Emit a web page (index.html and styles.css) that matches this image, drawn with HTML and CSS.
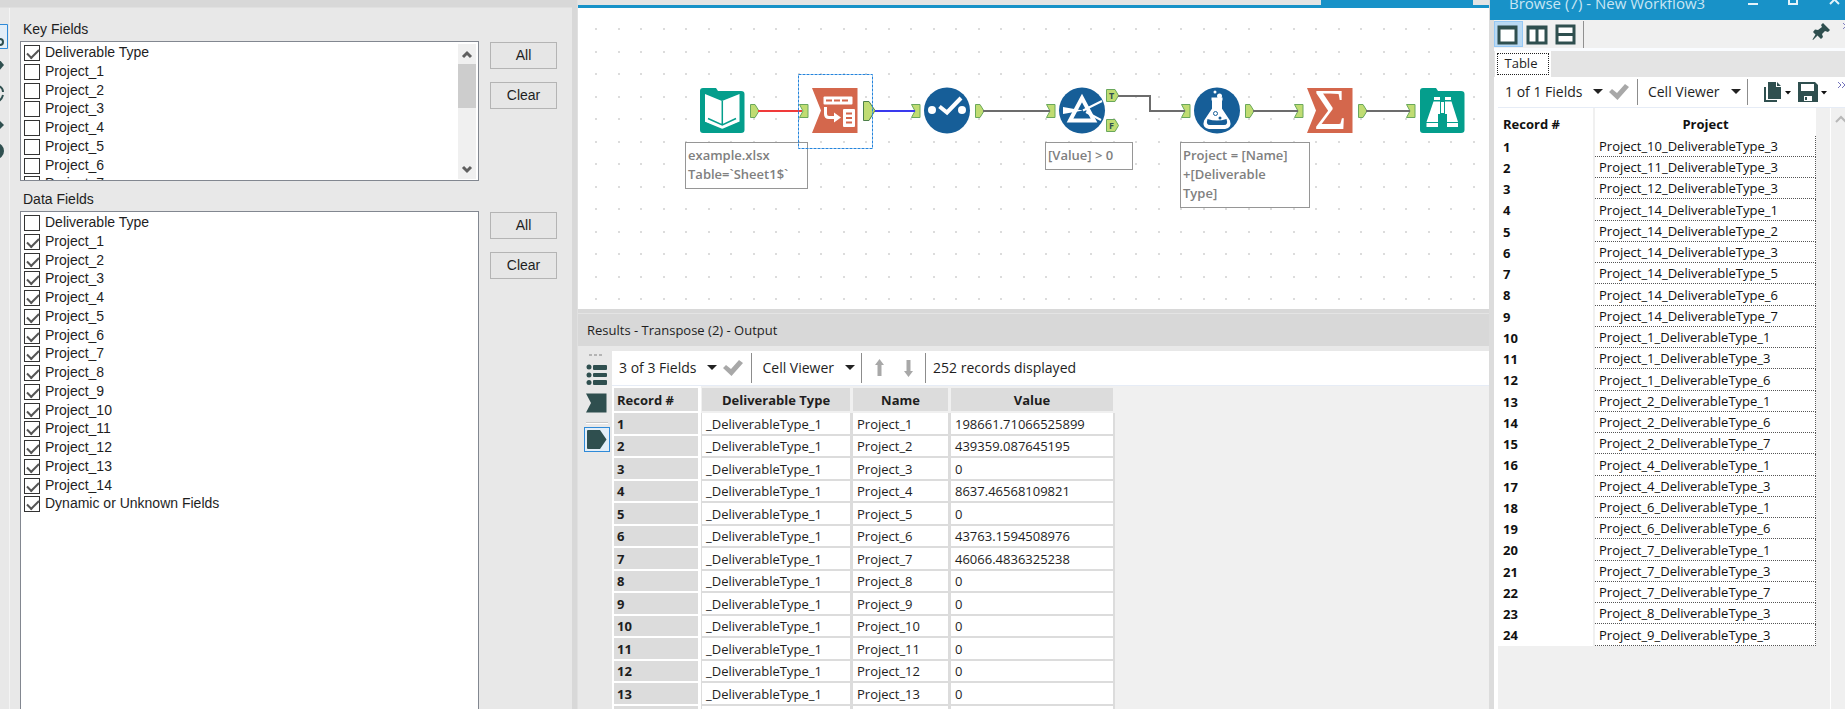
FILE: index.html
```
<!DOCTYPE html>
<html lang="en">
<head>
    <meta charset="UTF-8">
    <meta name="viewport" content="width=device-width, initial-scale=1.0">
    <title>New Workflow3</title>
    <link rel="stylesheet" href="styles.css">
</head>
<body>

<!-- Configuration panel -->
<aside class="config">
    <div class="config-bar"></div>
    <div class="config-body">
        <div class="config-rail">
            <svg width="9" height="152" viewBox="0 8 9 152">
                <path d="M-2 24.5H7.5V48.5H-2" fill="#e3eef8" stroke="#2f8ad8"/>
                <circle cx="0" cy="42" r="3" fill="none" stroke="#2f4f4f" stroke-width="2"/>
                <path d="M-2 58L4 65L-2 72Z" fill="#2f4f4f"/>
                <path d="M-1 86Q3 88 3 92M3 95Q2 99 -1 101" fill="none" stroke="#2f4f4f" stroke-width="2"/>
                <path d="M-2 119L4 125L-2 131Z" fill="#2f4f4f"/>
                <circle cx="-4" cy="151" r="8" fill="#2f4f4f"/>
            </svg>
        </div>
        <div class="config-fields">
            <section class="field-group">
                <h2>Key Fields</h2>
                <div class="field-row">
                    <div class="list-box key-box">
                        <ul class="field-list key-list" id="key-fields"></ul>
                        <div class="scrollbar">
                            <svg width="18" height="20" viewBox="0 0 18 20"><path d="M5 13L9 9L13 13" fill="none" stroke="#606060" stroke-width="3"/></svg>
                            <div class="thumb"></div>
                            <svg class="down" width="18" height="20" viewBox="0 0 18 20"><path d="M5 8L9 12L13 8" fill="none" stroke="#606060" stroke-width="3"/></svg>
                        </div>
                    </div>
                    <div class="field-buttons">
                        <button type="button">All</button>
                        <button type="button">Clear</button>
                    </div>
                </div>
            </section>
            <section class="field-group data-group">
                <h2>Data Fields</h2>
                <div class="field-row">
                    <div class="list-box">
                        <ul class="field-list data-list" id="data-fields"></ul>
                    </div>
                    <div class="field-buttons">
                        <button type="button">All</button>
                        <button type="button">Clear</button>
                    </div>
                </div>
            </section>
        </div>
    </div>
</aside>

<div class="splitter"></div>

<!-- Workflow canvas and results grid -->
<main class="workspace">
    <div class="tab-strip">
        <div class="tab-active"></div>
    </div>

    <div class="canvas">
        <div class="note note-input">example.xlsx<br>Table=`Sheet1$`</div>
        <div class="note note-filter">[Value] &gt; 0</div>
        <div class="note note-formula">Project = [Name]<br>+[Deliverable<br>Type]</div>

        <svg class="diagram" width="911" height="301" viewBox="578 8 911 301">
            <defs>
                <path id="out" d="M0.5 0.5H5L9 7L5 13.5H0.5Z" fill="#c0dc72" stroke="#6aa85c"/>
                <path id="in" d="M0.5 0.5H9V13.5H0.5L4 7Z" fill="#c0dc72" stroke="#6aa85c"/>
            </defs>

            <!-- Anchors -->
            <use href="#out" x="750" y="104"/>
            <use href="#in" x="799" y="104"/>
            <path d="M863.5 101.5H869L875 110.5L869 120.5H863.5Z" fill="#c0dc72" stroke="#4d7f4a"/>
            <use href="#in" x="911" y="104"/>
            <use href="#out" x="975" y="104"/>
            <use href="#in" x="1046" y="104"/>
            <use href="#in" x="1181" y="104"/>
            <use href="#out" x="1245" y="104"/>
            <use href="#in" x="1294" y="104"/>
            <use href="#out" x="1358" y="104"/>
            <use href="#in" x="1406" y="104"/>
            <path d="M1106.5 89.5H1115L1118.5 95.5L1115 101.5H1106.5Z M1106.5 119.5H1115L1118.5 125.5L1115 131.5H1106.5Z" fill="#c0dc72" stroke="#6aa85c"/>
            <text class="anchor-text" x="1109" y="99">T</text>
            <text class="anchor-text" x="1109" y="129">F</text>

            <!-- Connections -->
            <g fill="none" stroke="#6c6c6c" stroke-width="2">
                <path d="M758 111H802" stroke="#f03a3a"/>
                <path d="M875 111H915" stroke="#3a3aee"/>
                <path d="M983 111H1050"/>
                <path d="M1118 96H1150V111H1185"/>
                <path d="M1253 111H1298"/>
                <path d="M1366 111H1410"/>
            </g>

            <!-- Input Data -->
            <path d="M703 88H716L718 91H741Q744.500 91 744.500 94V130Q744.500 133 741 133H703Q700 133 700 130V91Q700 88 703 88Z" fill="#049e8c"/>
            <path d="M705 94L722 101L739.500 94V122L722 130L705 122Z" fill="#fff"/>
            <path d="M722.300 101V125M708 118.500L722.300 125L736 118.500" fill="none" stroke="#049e8c" stroke-width="1.500"/>
            <path d="M704 122.500L722.300 130L740 122.500" fill="none" stroke="#049e8c" stroke-width="2"/>

            <!-- Transpose -->
            <rect x="798.500" y="74.500" width="74" height="74" fill="none" stroke="#2484dc" stroke-dasharray="3 1"/>
            <path d="M812 88H857.500V133H812L821 110.500Z" fill="#d4674c"/>
            <rect x="823.500" y="96.500" width="29" height="8" rx="1" fill="#fff"/>
            <path d="M826 100.500H850" stroke="#d4674c" stroke-width="2" stroke-dasharray="6 2"/>
            <path d="M825.500 107V114Q825.500 117.500 829 117.500H835" fill="none" stroke="#fff" stroke-width="3"/>
            <path d="M834 112.500L841 117.500L834 122.500Z" fill="#fff"/>
            <rect x="843" y="109" width="12" height="18" rx="1" fill="#fff"/>
            <path d="M846 113.500H852M846 118H852M846 122.500H852" stroke="#d4674c" stroke-width="2"/>

            <!-- Select -->
            <circle cx="947" cy="110.500" r="23" fill="#165e98"/>
            <circle cx="932" cy="110" r="4" fill="#fff"/>
            <circle cx="962" cy="110" r="4" fill="#fff"/>
            <path d="M939.500 106.500L947 112.500L961 98" fill="none" stroke="#fff" stroke-width="4"/>

            <!-- Filter -->
            <circle cx="1082" cy="110.500" r="23" fill="#165e98"/>
            <path d="M1082 98L1070 120.500H1094Z" fill="#165e98" stroke="#fff" stroke-width="4"/>
            <path d="M1063 107L1083 110.500L1063 114Z" fill="#fff"/>
            <path d="M1083 110.500L1102 101M1086 112L1101 120" stroke="#fff" stroke-width="2"/>

            <!-- Formula -->
            <circle cx="1217" cy="110.500" r="23" fill="#165e98"/>
            <path d="M1211.500 99H1222.500M1213.500 99V109L1205.500 121Q1203.500 127 1209 127.500H1225Q1230.500 127 1228.500 121L1220.500 109V99" fill="#fff" stroke="#fff" stroke-width="3" stroke-linejoin="round"/>
            <path d="M1207.500 119Q1217 122 1226.500 119Q1228.500 125 1224 125H1210Q1205.500 125 1207.500 119Z" fill="#165e98"/>
            <circle cx="1215.500" cy="113.500" r="2" fill="none" stroke="#165e98" stroke-width="1"/>
            <circle cx="1220" cy="118" r="1.500" fill="#165e98"/>
            <circle cx="1219.500" cy="96" r="2.500" fill="#fff"/>
            <circle cx="1215" cy="92" r="1.500" fill="#fff"/>

            <!-- Summarize -->
            <path d="M1307 88H1352.500V133H1307L1316 110.500Z" fill="#d4674c"/>
            <text class="sigma" x="1314" y="129">Σ</text>

            <!-- Browse -->
            <path d="M1423 88H1436L1438 91H1461Q1464.500 91 1464.500 94V130Q1464.500 133 1461 133H1423Q1420 133 1420 130V91Q1420 88 1423 88Z" fill="#049e8c"/>
            <path d="M1434 97H1440V100H1434ZM1445 97H1451V100H1445ZM1433.500 101.500H1440V114H1438V127H1426.500V122ZM1451.500 101.500H1445V114H1447V127H1458V122ZM1441 102H1444V113H1441Z" fill="#fff"/>
            <path d="M1426 122.500H1438M1447 122.500H1458.500" stroke="#049e8c" stroke-width="1"/>
        </svg>
    </div>

    <section class="results">
        <h2 class="results-title">Results - Transpose (2) - Output</h2>
        <div class="results-body">
            <div class="results-rail">
                <svg width="28" height="102" viewBox="583 351 28 102">
                    <path d="M589 355H602" stroke="#b4b4b4" stroke-width="2" stroke-dasharray="3 2"/>
                    <g fill="#2f4f4f">
                        <circle cx="589" cy="367" r="2.500"/><rect x="593" y="365" width="14" height="5" rx="1"/>
                        <circle cx="589" cy="375" r="2.500"/><rect x="593" y="373" width="14" height="4" rx="1"/>
                        <circle cx="589" cy="382.500" r="2.500"/><rect x="593" y="380" width="14" height="5" rx="1"/>
                        <path d="M586 393.500H606.500V412.500H586L591 403Z"/>
                    </g>
                    <path d="M586 422.500H608" stroke="#c8c8c8"/>
                    <path d="M586 423.500H608" stroke="#fff"/>
                    <rect x="584.500" y="427.500" width="25" height="24" fill="#e3eef8" stroke="#2f8ad8"/>
                    <path d="M588 430H600L606.500 439.500L600 449H588Q587 449 587 448V431Q587 430 588 430Z" fill="#2f4f4f"/>
                </svg>
            </div>
            <div class="results-data">
                <div class="toolbar">
                    <button type="button" class="menu-button">3 of 3 Fields <span class="caret"></span></button>
                    <svg class="tick" width="20" height="16" viewBox="0 0 20 16"><path d="M0 8L3 5L8 9L16 0L20 3L8.500 16Z" fill="#a8a8a8"/></svg>
                    <span class="divider"></span>
                    <button type="button" class="menu-button viewer">Cell Viewer <span class="caret"></span></button>
                    <span class="divider"></span>
                    <svg class="arrows" width="38" height="18" viewBox="0 0 38 18"><path d="M0 6L4.500 0L9 6H6.500V17H2.500V6ZM29 12L33.500 18L38 12H35.500V1H31.500V12Z" fill="#a8a8a8"/></svg>
                    <span class="divider"></span>
                    <span class="record-count">252 records displayed</span>
                </div>
                <div class="grid-area">
                    <table class="results-grid">
                        <thead>
                            <tr><th class="col-record">Record #</th><th class="col-type">Deliverable Type</th><th class="col-name">Name</th><th class="col-value">Value</th></tr>
                        </thead>
                        <tbody id="results-rows"></tbody>
                    </table>
                </div>
            </div>
        </div>
    </section>
</main>

<!-- Browse window -->
<section class="browse">
    <header class="title-bar">
        <h1>Browse (7) - New Workflow3</h1>
        <svg width="92" height="20" viewBox="1748 -8 92 20"><path d="M1748 3H1758M1789 -4V3H1797V-4M1830 -6L1839 3M1839 -6L1830 3" fill="none" stroke="#e4f3fa" stroke-width="2"/></svg>
    </header>
    <div class="browse-body">
        <div class="layout-bar">
            <svg width="94" height="28" viewBox="1494 20 94 28">
                <rect x="1494.500" y="21.500" width="28" height="25" fill="#b9d9f3" stroke="#96c8f5"/>
                <g fill="#fff" stroke="#2f4f4f" stroke-width="3">
                    <rect x="1499" y="27" width="17" height="16"/>
                    <rect x="1528" y="27" width="18" height="16"/>
                    <rect x="1557" y="26" width="17" height="17"/>
                    <path d="M1498 28H1517M1527 28H1547M1537 27V43M1556 34.500H1575"/>
                </g>
                <path d="M1583.500 21V48" stroke="#909090"/>
            </svg>
            <svg width="36" height="24" viewBox="1809 22 36 24">
                <path d="M1823 25L1830 32L1828 34L1825 33L1822 36L1823 39L1821 41L1817.500 37.500L1813 42L1812.500 41.500L1815.500 36.500L1813 34L1815 31.500L1818 32L1822 29L1821 27Z" fill="#2f4f4f"/>
                <path d="M1843 25L1846 28L1843 31" fill="none" stroke="#8080c0"/>
            </svg>
        </div>
        <div class="tabs">
            <button type="button" class="tab">Table</button>
        </div>
        <div class="toolbar browse-toolbar">
            <button type="button" class="menu-button">1 of 1 Fields <span class="caret"></span></button>
            <svg class="tick" width="20" height="16" viewBox="0 0 20 16"><path d="M0 8L3 5L8 9L16 0L20 3L8.500 16Z" fill="#a8a8a8"/></svg>
            <span class="divider"></span>
            <button type="button" class="menu-button viewer">Cell Viewer <span class="caret"></span></button>
            <span class="divider"></span>
            <svg class="file-icons" width="81" height="22" viewBox="1764 82 81 22">
                <path d="M1765 88V102H1777" fill="none" stroke="#2f4f4f" stroke-width="2"/>
                <path d="M1768 83H1776V88H1781V100H1768ZM1777 83L1781 87H1777Z" fill="#2f4f4f"/>
                <path d="M1785 92H1791L1788 95.500ZM1821 92H1827L1824 95.500Z" fill="#111"/>
                <path d="M1798 83H1815L1818 86V103H1798Z" fill="#2f4f4f"/>
                <path d="M1801 85H1814V92H1801ZM1804 97H1812V102H1804Z" fill="#fff"/>
                <path d="M1806 98V101" stroke="#2f4f4f" stroke-width="2"/>
                <path d="M1838 83L1841 86L1838 89M1842 83L1845 86L1842 89" fill="none" stroke="#7474bc"/>
            </svg>
        </div>
        <div class="browse-data">
            <table class="browse-grid">
                <thead>
                    <tr><th class="col-id">Record #</th><th class="col-project">Project</th></tr>
                </thead>
                <tbody id="browse-rows"></tbody>
            </table>
            <div class="browse-scroll">
                <svg width="14" height="20" viewBox="0 0 14 20"><path d="M5 14L10 9L15 14" fill="none" stroke="#b8b8b8" stroke-width="2"/></svg>
            </div>
        </div>
    </div>
</section>

<script src="script.js"></script>
</body>
</html>
```
FILE: styles.css
```
/* Basic styling */
* {
    box-sizing: border-box;
}
body {
    margin: 0;
    display: flex;
    height: 100vh;
    overflow: hidden;
    background: #e8e8e8;
    color: #1e1e1e;
    font-family: "Open Sans", "Noto Sans", sans-serif;
    font-size: 14px;
}
h1, h2 {
    margin: 0;
    font-weight: normal;
}
button {
    font: inherit;
    color: inherit;
}
svg {
    display: block;
    flex: none;
}

/* Configuration panel */
.config {
    flex: 0 0 572px;
    display: flex;
    flex-direction: column;
    font-family: "Liberation Sans", Arial, sans-serif;
    font-size: 14px;
}
.config-bar {
    flex: 0 0 8px;
    background: #d8d8d8;
    border-bottom: 1px solid #e0e0e0;
}
.config-body {
    flex: 1;
    display: flex;
    min-height: 0;
}
.config-rail {
    flex: 0 0 10px;
    border-right: 1px solid #f4f4f4;
}
.config-fields {
    flex: 1;
    display: flex;
    flex-direction: column;
    padding: 12px 15px 0 10px;
}
.field-group {
    display: flex;
    flex-direction: column;
}
.data-group {
    flex: 1;
    margin-top: 9px;
    min-height: 0;
}
.field-group h2 {
    height: 21px;
    padding-left: 3px;
    font-size: 14px;
    line-height: 18px;
}
.field-row {
    flex: 1;
    display: flex;
    gap: 11px;
    min-height: 0;
}
.list-box {
    flex: 1;
    display: flex;
    background: #fff;
    border: 1px solid #828790;
    border-bottom: 0;
    padding: 1px 2px;
}
.key-box {
    height: 140px;
    overflow: hidden;
    border-bottom: 1px solid #828790;
}
.field-list {
    flex: 1;
    display: grid;
    grid-auto-rows: 1fr;
    margin: 0;
    padding: 0;
    list-style: none;
}
.key-list {
    height: 150px;
}
.data-list {
    height: 300px;
}
.field-list label {
    display: flex;
    align-items: center;
    gap: 5px;
    line-height: 18px;
}
.field-list input {
    appearance: none;
    width: 16px;
    height: 16px;
    margin: 2px 0 0 1px;
    border: 1px solid #333;
    background: #fff;
}
.field-list input:checked::after {
    content: "";
    display: block;
    width: 10px;
    height: 5px;
    margin: 3px 0 0 2px;
    border-left: 2px solid #555;
    border-bottom: 2px solid #555;
    transform: rotate(-45deg);
}
.scrollbar {
    flex: 0 0 18px;
    display: flex;
    flex-direction: column;
    margin-top: 1px;
    background: #f0f0f0;
}
.thumb {
    height: 44px;
    background: #cdcdcd;
}
.down {
    margin-top: auto;
}
.field-buttons {
    flex: 0 0 67px;
    display: flex;
    flex-direction: column;
    gap: 13px;
    padding-top: 1px;
}
.field-buttons button {
    height: 27px;
    padding: 0 0 2px;
    border: 1px solid #b4b4b4;
    background: #e6e6e6;
}

.splitter {
    flex: 0 0 6px;
    background: #d8d8d8;
    border-right: 1px solid #e0e0e0;
}

/* Workflow canvas */
.workspace {
    flex: 1;
    display: flex;
    flex-direction: column;
    min-width: 0;
}
.tab-strip {
    flex: 0 0 8px;
    display: flex;
    justify-content: flex-end;
    padding-right: 16px;
    background: #e4e4e4;
    border-bottom: 3px solid #1892c8;
}
.tab-active {
    width: 152px;
    background: #1892c8;
}
.canvas {
    position: relative;
    flex: 0 0 301px;
    overflow: hidden;
    background-color: #fff;
    background-image:
        radial-gradient(circle at 1px 1px, #dcdcdc 1px, transparent 1px),
        radial-gradient(circle at 1px 1px, #dcdcdc 1px, transparent 1px),
        radial-gradient(circle at 1px 1px, #dcdcdc 1px, transparent 1px),
        radial-gradient(circle at 1px 1px, #dcdcdc 1px, transparent 1px);
    background-size: 45px 45px;
    background-position: 17px 20px, 40px 20px, 17px 43px, 40px 43px;
}
.diagram {
    position: absolute;
    left: 0;
    top: 0;
}
.anchor-text {
    font: bold 9px "Open Sans", sans-serif;
    fill: #2f4f4f;
}
.sigma {
    font: 56px "Liberation Serif", serif;
    fill: #fff;
}
.note {
    position: absolute;
    top: 134px;
    padding: 3px 2px 4px;
    border: 1px solid #969696;
    background: #fff;
    color: #808080;
    font-size: 13px;
    font-weight: 600;
    line-height: 19px;
    white-space: nowrap;
}
.note-input {
    left: 107px;
    width: 123px;
}
.note-filter {
    left: 467px;
    width: 88px;
}
.note-formula {
    left: 602px;
    width: 130px;
}

/* Results */
.results {
    flex: 1;
    display: flex;
    flex-direction: column;
    min-height: 0;
    border-top: 4px solid #d8d8d8;
}
.results-title {
    flex: 0 0 33px;
    padding-left: 9px;
    border-top: 1px solid #e4e4e4;
    background: #d8d8d8;
    font-size: 13px;
    line-height: 32px;
}
.results-body {
    flex: 1;
    display: flex;
    min-height: 0;
    padding-top: 5px;
}
.results-rail {
    flex: 0 0 34px;
    padding-left: 5px;
}
.results-data {
    flex: 1;
    display: flex;
    flex-direction: column;
    min-width: 0;
}
.toolbar {
    display: flex;
    align-items: center;
    height: 35px;
    padding: 0 0 1px 7px;
    background: #fff;
    border-bottom: 1px solid #e6ecf6;
    white-space: nowrap;
}
.menu-button {
    display: flex;
    align-items: center;
    gap: 11px;
    padding: 0;
    border: 0;
    background: none;
}
.caret {
    border: 5px solid transparent;
    border-top-color: #222;
    border-bottom-width: 0;
}
.tick {
    margin: 0 8px 0 6px;
}
.divider {
    width: 1px;
    height: 30px;
    background: #8c8c8c;
}
.viewer {
    margin: 0 6px 0 10px;
}
.arrows {
    margin: 0 12px 0 13px;
}
.record-count {
    margin-left: 7px;
}
.grid-area {
    flex: 1;
    min-height: 0;
    overflow: hidden;
    background: #f0f0f0;
}
.results-grid {
    border-spacing: 0;
    table-layout: fixed;
    width: 503px;
    background: #dcdcdc;
    font-size: 13px;
    line-height: 18px;
}
.results-grid th, .results-grid td {
    padding: 0 4px;
    border: 1px solid #f0f0f0;
    border-width: 0 2px 2px 1px;
    white-space: nowrap;
}
.results-grid th {
    background: #dcdcdc;
    font-weight: bold;
}
.results-grid thead th {
    height: 27px;
    border-top-width: 2px;
}
.results-grid td {
    height: 23px;
    background: #fff;
    border-color: #dcdcdc;
}
.results-grid tbody tr:nth-child(even) td {
    height: 22px;
}
.results-grid .col-record, .results-grid tbody th {
    text-align: left;
    padding-left: 3px;
    border-left-width: 2px;
    border-right-width: 3px;
    border-color: #fff;
}
.col-record {
    width: 89px;
}
.col-type {
    width: 151px;
}
.col-name {
    width: 98px;
}

/* Browse window */
.browse {
    flex: 0 0 356px;
    display: flex;
    flex-direction: column;
    min-width: 0;
    overflow: hidden;
}
.title-bar {
    display: flex;
    align-items: flex-end;
    justify-content: space-between;
    height: 20px;
    min-height: 0;
    flex: none;
    padding: 0 5px 7px 19px;
    overflow: hidden;
    border-left: 1px solid #d8d8d8;
    background: #1892c8;
    color: #c8e6f4;
}
.title-bar h1 {
    font-size: 15px;
    line-height: 20px;
}
.browse-body {
    flex: 1;
    display: flex;
    flex-direction: column;
    min-height: 0;
    border-left: 5px solid #dcdcdc;
    background: #fff;
}
.layout-bar {
    flex: 0 0 31px;
    display: flex;
    justify-content: space-between;
    border-bottom: 3px solid #fafcff;
    background: #f0f0f0;
}
.tabs {
    flex: 0 0 26px;
    display: flex;
    padding-left: 1px;
    background: #e4e4e4;
}
.tab {
    width: 56px;
    padding: 0 4px 2px 0;
    border: 0;
    background: #fff;
    font-size: 13px;
    outline: 1px dotted #222;
    outline-offset: -3px;
}
.browse-toolbar {
    flex: 0 0 31px;
    margin-left: 4px;
}
.browse-toolbar .divider {
    height: 26px;
}
.file-icons {
    margin-left: 17px;
}
.browse-data {
    flex: 1;
    display: flex;
    justify-content: space-between;
    align-items: flex-start;
    min-height: 0;
    margin-left: 4px;
    background: #f0f0f0;
}
.browse-grid {
    border-spacing: 0;
    table-layout: fixed;
    width: 318px;
    background: #fff;
    color: #111;
    font-size: 13px;
    line-height: 18px;
}
.browse-grid th, .browse-grid td {
    height: 21px;
    padding: 0 4px;
    white-space: nowrap;
}
.browse-grid thead th {
    height: 28px;
    padding-top: 3px;
}
.browse-grid tbody tr:nth-child(4n) td {
    height: 22px;
}
.browse-grid td {
    border-right: 1px dotted #555;
    border-bottom: 1px dotted #555;
}
.col-id {
    width: 97px;
}
.browse-grid .col-id, .browse-grid tbody th {
    text-align: left;
    padding-left: 5px;
    border-right: 2px solid #f0f0f0;
}
.browse-scroll {
    flex: 0 0 14px;
    align-self: stretch;
    border-left: 1px solid #fff;
}
```
FILE: script.js
```
const keyFields = document.getElementById('key-fields');
const dataFields = document.getElementById('data-fields');

function addField(list, name, checked) {
    const item = document.createElement('li');
    item.innerHTML = `<label><input type="checkbox"${checked ? ' checked' : ''}>${name}</label>`;
    list.appendChild(item);
}

addField(keyFields, 'Deliverable Type', true);
for (let i = 1; i <= 7; i++) {
    addField(keyFields, 'Project_' + i, false);
}

addField(dataFields, 'Deliverable Type', false);
for (let i = 1; i <= 14; i++) {
    addField(dataFields, 'Project_' + i, true);
}
addField(dataFields, 'Dynamic or Unknown Fields', true);

// Results grid
const values = {
    1: '198661.71066525899',
    2: '439359.087645195',
    4: '8637.46568109821',
    6: '43763.1594508976',
    7: '46066.4836325238'
};
const resultsRows = document.getElementById('results-rows');
for (let i = 1; i <= 14; i++) {
    const row = document.createElement('tr');
    row.innerHTML = `<th>${i}</th><td>_DeliverableType_1</td><td>Project_${i}</td><td>${values[i] || 0}</td>`;
    resultsRows.appendChild(row);
}

// Browse grid: project number, deliverable type
const projects = [
    [10, 3], [11, 3], [12, 3], [14, 1], [14, 2], [14, 3], [14, 5], [14, 6],
    [14, 7], [1, 1], [1, 3], [1, 6], [2, 1], [2, 6], [2, 7], [4, 1],
    [4, 3], [6, 1], [6, 6], [7, 1], [7, 3], [7, 7], [8, 3], [9, 3]
];
const browseRows = document.getElementById('browse-rows');
projects.forEach(([project, type], index) => {
    const row = document.createElement('tr');
    row.innerHTML = `<th>${index + 1}</th><td>Project_${project}_DeliverableType_${type}</td>`;
    browseRows.appendChild(row);
});
```
